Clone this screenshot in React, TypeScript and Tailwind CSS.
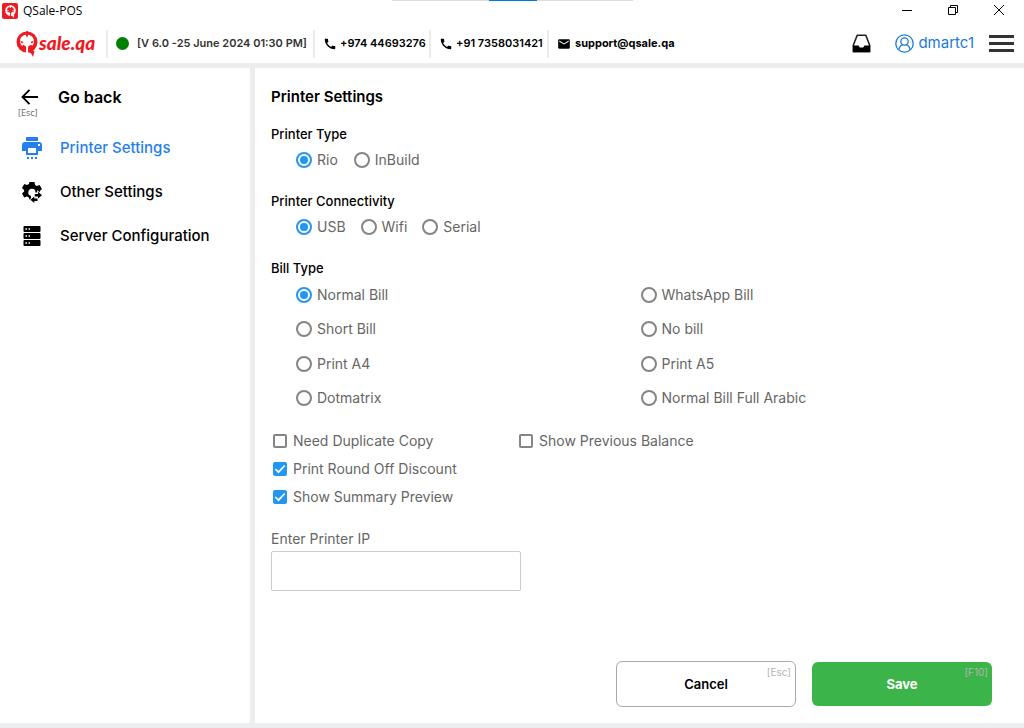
import type { ReactNode } from 'react';
import { MdCall, MdEmail } from 'react-icons/md';

function QMark({ className, color, inner }: { className: string; color: string; inner: string }) {
  return (
    <svg viewBox="0 0 22 26" className={className} aria-hidden="true">
      <circle cx="11" cy="11" r="10.500" fill={color} />
      <path d="M9.800 3.800C5.500 4.500 3.800 7.500 4.100 11c.2 1.800 1 3 2 4l1.400-1.200 2.500 1.700.2 6.300 1.700.2.300-6.500 2.500-1.700 1.600 1c1.200-1.500 1.900-3 1.700-5.200-.3-3-2.500-5.300-5.800-5.800L11 6z" fill={inner} />
      <path d="M10.200 0h1.600v4.600L11 6.500l-.8-1.900z" fill={color} />
      <path d="M4 9.600 7.500 11 6 12.800zM18 9.600 14.500 11l1.500 1.800z" fill={color} />
      <path d="M12.500 17.500 18.500 20 17 26l-1.800-3.500-3-1.500z" fill={color} />
    </svg>
  );
}

function PrinterIcon() {
  return (
    <svg viewBox="0 0 20 22" className="h-[22px] w-5 fill-current" aria-hidden="true">
      <path d="M4 0h12v4H4z" />
      <path fillRule="evenodd" d="M3 5h14a3 3 0 0 1 3 3v6h-4v4H4v-4H0V8a3 3 0 0 1 3-3zm3 6v5h8v-5zm10-4v2h2V7z" />
      <path d="M5 20h2v2H5zM9 20h2v2H9zM13 20h2v2h-2z" />
    </svg>
  );
}

function GearArrowsIcon() {
  return (
    <svg viewBox="0 0 20 21" className="h-[21px] w-5" aria-hidden="true">
      <path d="M7.500 0h5l.6 2.900 1.700 1 2.800-1 2.400 4.200-2.200 2 .1 1.400h-4.400A3.600 3.600 0 1 0 9 13.900V18H7.500l-.6-2.500-1.900-1-2.800.9L0 11.400l2.100-1.900V7.900L0 6l2.300-4 2.700.9 1.900-1z" fill="black" />
      <path d="M16 9.800 20 13.200l-4 3.200v-2h-3.200v-2.400H16zM12.300 14.600v2h3.200V19h-3.200v2L8.400 17.800z" fill="black" stroke="white" strokeWidth="1.600" paintOrder="stroke" />
    </svg>
  );
}

function ServerIcon() {
  return (
    <svg viewBox="0 0 18 21" className="h-[21px] w-[18px]" aria-hidden="true">
      {[0, 7, 14].map((y) => (
        <g key={y}>
          <rect x="0.500" y={y} width="17" height="6" rx="1" fill="black" />
          <path d={`M2.500 ${y + 3}h1.500M5.500 ${y + 3}h1.500`} stroke="white" strokeWidth="1.600" />
        </g>
      ))}
    </svg>
  );
}

function Contact({ href, icon, className, children }: { href: string; icon: ReactNode; className: string; children: ReactNode }) {
  return (
    <a href={href} className={`flex h-7 shrink-0 items-center border-l-2 border-[#ebebed] pl-2 text-[11px] whitespace-nowrap text-black ${className}`}>
      {icon}
      {children}
    </a>
  );
}

function Radio({ name, label, checked }: { name: string; label: string; checked?: boolean }) {
  return (
    <label className="flex items-center gap-[5px] text-sm text-[#666666]">
      <input
        type="radio"
        name={name}
        defaultChecked={checked}
        className="m-0 size-4 shrink-0 appearance-none rounded-full border-2 border-[#858585] bg-white bg-clip-content p-0.5 checked:border-[#2196f3] checked:bg-[#2196f3]"
      />
      {label}
    </label>
  );
}

function Check({ label, checked }: { label: string; checked?: boolean }) {
  return (
    <label className="flex h-7 items-center gap-1.5 pl-0.5 text-sm text-[#666666]">
      <span className="grid shrink-0">
        <input
          type="checkbox"
          defaultChecked={checked}
          className="peer col-start-1 row-start-1 size-3.5 appearance-none rounded-[2px] border-2 border-[#858585] checked:border-[#2196f3] checked:bg-[#2196f3]"
        />
        <svg viewBox="0 0 14 14" className="pointer-events-none invisible col-start-1 row-start-1 size-3.5 peer-checked:visible" fill="none" aria-hidden="true">
          <path d="M2.300 7 5.500 10.200l6.200-6.700" stroke="white" strokeWidth="1.700" />
        </svg>
      </span>
      {label}
    </label>
  );
}

const billTypes = ['Normal Bill', 'WhatsApp Bill', 'Short Bill', 'No bill', 'Print A4', 'Print A5', 'Dotmatrix', 'Normal Bill Full Arabic'];

const navItems = [
  { label: 'Printer Settings', icon: <PrinterIcon />, active: true },
  { label: 'Other Settings', icon: <GearArrowsIcon />, active: false },
  { label: 'Server Configuration', icon: <ServerIcon />, active: false },
];

function TitleBar() {
  return (
    <div className="relative flex h-[22px] items-center justify-between pr-[19px] pl-0.5">
      <div className="absolute top-0 left-[392px] flex h-px w-[241px] justify-center bg-[#dddddd]">
        <div className="h-px w-12 bg-[#0078d7]" />
      </div>
      <div className="flex items-center gap-[5px] font-['Open_Sans',sans-serif] text-xs text-black">
        <span className="flex size-4 items-center justify-center rounded-[2px] bg-[#ed1c24]">
          <QMark className="h-[13px] w-[11px]" color="white" inner="#ed1c24" />
        </span>
        QSale-POS
      </div>
      <div className="flex items-center gap-[34px] pb-0.5">
        <button type="button" aria-label="Minimize" className="size-3">
          <svg viewBox="0 0 12 12" className="size-3"><path d="M1 6.500h10" stroke="black" /></svg>
        </button>
        <button type="button" aria-label="Restore" className="size-3">
          <svg viewBox="0 0 12 12" className="size-3" fill="none" stroke="black"><path d="M1.500 3.500h7v7h-7zM3.500 3.500v-2h7v7h-2" /></svg>
        </button>
        <button type="button" aria-label="Close" className="size-3">
          <svg viewBox="0 0 12 12" className="size-3"><path d="m1 1 10 10M11 1 1 11" stroke="black" /></svg>
        </button>
      </div>
    </div>
  );
}

function Header() {
  return (
    <header className="flex h-[41px] items-center pt-0.5 pr-2.5 pl-4">
      <a href="#home" className="flex w-[90px] shrink-0 items-center gap-px text-[#ed1c24]">
        <QMark className="h-[26px] w-[22px]" color="#ed1c24" inner="white" />
        <span className="pb-0.5 font-['Lato',sans-serif] text-[19px] leading-5 font-black italic">sale.qa</span>
      </a>
      <div className="flex h-7 w-[207px] shrink-0 items-center gap-2 border-l-2 border-[#ebebed] pl-2 text-[11px] font-semibold whitespace-nowrap text-[#333333]">
        <span className="size-[13px] shrink-0 rounded-full bg-[#008000]" />
        [V 6.0 -25 June 2024 01:30 PM]
      </div>
      <Contact href="tel:+97444693276" className="w-[116px] gap-[3px] font-semibold" icon={<MdCall className="size-3.5" />}>+974 44693276</Contact>
      <Contact href="tel:+917358031421" className="w-[118px] gap-[3px] font-semibold" icon={<MdCall className="size-3.5" />}>+91 7358031421</Contact>
      <Contact href="mailto:support@qsale.qa" className="gap-1 font-bold" icon={<MdEmail className="size-3.5" />}>support@qsale.qa</Contact>
      <div className="ml-auto flex items-center">
        <button type="button" aria-label="Inbox" className="mr-6">
          <svg viewBox="0 0 19 19" className="size-[19px]" aria-hidden="true">
            <path d="M5.200 1.200h8.600l3.900 10v6.600H1.300v-6.600z" fill="white" stroke="#222222" strokeWidth="1.600" strokeLinejoin="round" />
            <path d="M1 11.500h5.500l1.300 2h3.400l1.300-2H18V18H1z" fill="black" />
          </svg>
        </button>
        <a href="#account" className="flex items-center gap-1 text-[15px] text-[#1c7ad9]">
          <svg viewBox="0 0 19 19" className="size-[19px]" fill="none" stroke="currentColor" strokeWidth="1.300" aria-hidden="true">
            <circle cx="9.500" cy="9.500" r="8.700" />
            <circle cx="9.500" cy="7.500" r="3.700" />
            <path d="M3.800 16c.4-3 2.200-4.700 3.900-5.200M15.200 16c-.4-3-2.200-4.700-3.900-5.200" />
          </svg>
          dmartc1
        </a>
        <button type="button" aria-label="Menu" className="ml-[15px] flex w-[25px] flex-col gap-1">
          <span className="h-[3px] bg-[#333333]" />
          <span className="h-[3px] bg-[#333333]" />
          <span className="h-[3px] bg-[#333333]" />
        </button>
      </div>
    </header>
  );
}

export default function App() {
  return (
    <div className="flex min-h-screen flex-col bg-white font-['Inter',sans-serif]">
      <TitleBar />
      <Header />
      <div className="flex flex-1 gap-[5px] border-y-[5px] border-[#ebedef] bg-[#ebedef]">
        <nav className="w-[250px] shrink-0 bg-white">
          <button type="button" className="flex h-[58px] items-start pt-[17px] pl-[18px] text-left text-base leading-6 font-semibold text-black">
            <span className="flex w-10 flex-col items-start">
              <svg viewBox="0 0 17 24" className="ml-[3px] h-6 w-[17px]" fill="none" stroke="black" strokeWidth="1.900" aria-hidden="true">
                <path d="M17 12H1.500M8.500 4.800 1.500 12l7 7.200" />
              </svg>
              <span className="font-['Open_Sans',sans-serif] text-[9px] leading-2 font-normal text-[#666666]">[Esc]</span>
            </span>
            Go back
          </button>
          {navItems.map((item) => (
            <a
              key={item.label}
              href="#settings"
              aria-current={item.active ? 'page' : undefined}
              className={`flex h-11 items-center text-[15px] font-medium ${item.active ? 'text-[#2680eb]' : 'text-black'}`}
            >
              <span className="flex w-[60px] justify-center pl-1">{item.icon}</span>
              {item.label}
            </a>
          ))}
        </nav>
        <main className="flex flex-1 flex-col bg-white pr-8 pb-4 pl-4">
          <h1 className="pt-[19px] text-[15px] leading-5 font-semibold text-black">Printer Settings</h1>
          <fieldset className="mt-[17px]">
            <legend className="text-[13px] leading-5 font-medium text-black">Printer Type</legend>
            <div className="flex h-8 items-center gap-4 pl-[25px]">
              <Radio name="type" label="Rio" checked />
              <Radio name="type" label="InBuild" />
            </div>
          </fieldset>
          <fieldset className="mt-[15px]">
            <legend className="text-[13px] leading-5 font-medium text-black">Printer Connectivity</legend>
            <div className="flex h-8 items-center gap-[15px] pl-[25px]">
              <Radio name="connectivity" label="USB" checked />
              <Radio name="connectivity" label="Wifi" />
              <Radio name="connectivity" label="Serial" />
            </div>
          </fieldset>
          <fieldset className="mt-[15px]">
            <legend className="text-[13px] leading-5 font-medium text-black">Bill Type</legend>
            <div className="grid h-[137px] grid-cols-2 grid-rows-4 pr-[7px] pl-[25px]">
              {billTypes.map((label, i) => (
                <Radio key={label} name="bill" label={label} checked={i === 0} />
              ))}
            </div>
          </fieldset>
          <div className="mt-3 grid grid-cols-[246px_1fr]">
            <Check label="Need Duplicate Copy" />
            <Check label="Show Previous Balance" />
            <Check label="Print Round Off Discount" checked />
            <div />
            <Check label="Show Summary Preview" checked />
          </div>
          <label htmlFor="printer-ip" className="mt-[18px] text-sm text-[#666666]">Enter Printer IP</label>
          <input id="printer-ip" type="text" className="mt-0.5 h-10 w-[250px] rounded-[2px] border border-[#cccccc] px-3 text-sm" />
          <div className="mt-auto flex items-center justify-end gap-4 pt-8">
            <button type="button" className="relative h-[46px] w-[180px] rounded-md border border-[#aaaaaa] bg-white text-[13px] leading-5 font-semibold text-black">
              Cancel
              <span className="absolute top-1 right-1 text-[10px] leading-3 font-normal text-[#b3b3b3]">[Esc]</span>
            </button>
            <button type="button" className="relative h-11 w-[180px] rounded-md bg-[#3bb54a] text-[13px] leading-5 font-bold text-white">
              Save
              <span className="absolute top-1 right-1 text-[10px] leading-3 font-normal text-[#b3b3b3]">[F10]</span>
            </button>
          </div>
        </main>
      </div>
    </div>
  );
}
